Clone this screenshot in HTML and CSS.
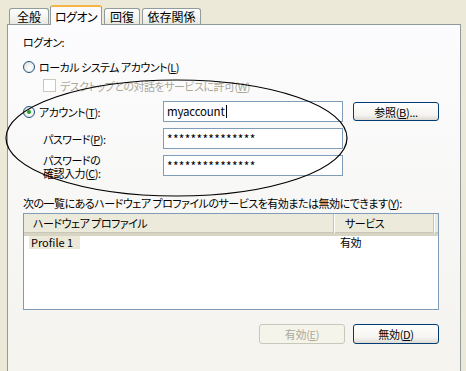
FILE: index.html
```html
<!DOCTYPE html>
<html>
<head>
    <meta charset="UTF-8">
    <title>プロパティ - ログオン</title>
    <link rel="stylesheet" href="styles.css">
</head>
<body>
<div class="window">
    <div class="tabs">
        <div class="tab tab-general">全般</div>
        <div class="tab tab-active">ログオン</div>
        <div class="tab tab-recovery">回復</div>
        <div class="tab tab-deps">依存関係</div>
    </div>

    <div class="panel">
        <div class="caption">ログオン:</div>

        <div class="option option-local"><span class="radio"></span>ローカル システム アカウント(<u>L</u>)</div>
        <div class="option option-desktop"><span class="check"></span>デスクトップとの対話をサービスに許可(<u>W</u>)</div>

        <div class="account-grid">
            <div class="option"><span class="radio radio-on"></span>アカウント(<u>T</u>):</div>
            <div class="field">myaccount<span class="caret"></span></div>
            <button class="btn">参照(<u>B</u>)...</button>

            <div class="field-label">パスワード(<u>P</u>):</div>
            <div class="field secret">***************</div>
            <div></div>

            <div class="field-label two-line">
                <div>パスワードの</div>
                <div>確認入力(<u>C</u>):</div>
            </div>
            <div class="field secret">***************</div>
            <div></div>
        </div>

        <div class="list-caption">次の一覧にあるハードウェア プロファイルのサービスを有効または無効にできます(<u>Y</u>):</div>

        <div class="listview">
            <div class="list-head">
                <div class="col col-profile">ハードウェア プロファイル</div>
                <div class="col col-service">サービス</div>
                <div class="col col-rest"></div>
            </div>
            <div class="list-row">
                <div class="cell-profile"><span class="sel">Profile 1</span></div>
                <div class="cell-service">有効</div>
            </div>
        </div>

        <div class="actions">
            <button class="btn" disabled>有効(<u>E</u>)</button>
            <button class="btn">無効(<u>D</u>)</button>
        </div>
    </div>

    <!-- hand drawn marker over the account fields -->
    <svg class="annotation" width="466" height="371" viewBox="0 0 466 371">
        <ellipse cx="176.5" cy="138" rx="170.5" ry="58" fill="none" stroke="#000" stroke-width="1.2"/>
    </svg>
</div>
</body>
</html>
```

FILE: styles.css
```css
body {
    margin: 0;
    padding: 0;
    background-color: #ece9d8;
    font-family: "Noto Sans CJK JP", "Liberation Sans", sans-serif;
    font-size: 11px;
    letter-spacing: -0.5px;
    font-feature-settings: "palt";
    color: #000;
}

.window {
    position: relative;
    width: 466px;
    height: 371px;
    padding: 5px 0 0 7px;
    box-sizing: border-box;
}

/* tabs */

.tabs {
    display: flex;
    align-items: flex-end;
    height: 19px;
    padding-left: 2px;
}

.tab {
    height: 15px;
    line-height: 16px;
    border: 1px solid #919b9c;
    border-bottom: none;
    border-radius: 3px 3px 0 0;
    background: linear-gradient(#ffffff, #f3f3ef 60%, #e8e7e0);
    text-align: center;
    margin-right: 1px;
    font-size: 12px;
    letter-spacing: 0;
}

.tab-general {
    width: 38px;
}

.tab-recovery {
    width: 34px;
    margin-left: 1px;
    margin-right: 2px;
}

.tab-deps {
    width: 57px;
}

.tab-active {
    position: relative;
    width: 50px;
    height: 18px;
    line-height: 19px;
    margin-bottom: -1px;
    background: #fcfcfe;
    border-top: 2px solid #f5b446;
    border-color: #919b9c;
    border-top-color: #f5b446;
    letter-spacing: -0.5px;
    z-index: 2;
}

/* panel */

.panel {
    width: 416px;
    height: 341px;
    border: 1px solid #919b9c;
    background: linear-gradient(#fcfcfe, #f4f3ee);
    padding: 10px 21px 0 15px;
    display: flex;
    flex-direction: column;
}

.caption {
    height: 15px;
    line-height: 15px;
}

.option {
    display: flex;
    align-items: center;
    height: 14px;
    line-height: 14px;
    white-space: nowrap;
}

.option-local {
    margin-top: 10px;
}

.option-desktop {
    margin-top: 5px;
    padding-left: 20px;
    height: 13px;
    color: #aca899;
}

.radio {
    width: 10px;
    height: 10px;
    border: 1px solid #1c5180;
    border-radius: 50%;
    background: radial-gradient(circle at 60% 60%, #ffffff, #dcdcd6);
    margin-right: 4px;
    position: relative;
    flex: none;
}

.radio-on::after {
    content: "";
    position: absolute;
    left: 3px;
    top: 3px;
    width: 4px;
    height: 4px;
    border-radius: 50%;
    background: #21a121;
}

.check {
    width: 11px;
    height: 11px;
    border: 1px solid #cac8bb;
    background: #fff;
    margin-right: 4px;
    flex: none;
}

/* account fields */

.account-grid {
    display: grid;
    grid-template-columns: 130px 180px 86px;
    grid-auto-rows: 21px;
    column-gap: 10px;
    row-gap: 6px;
    margin-top: 9px;
    align-items: center;
}

.field {
    height: 19px;
    line-height: 19px;
    border: 1px solid #7f9db9;
    background: #fff;
    padding-left: 3px;
    display: flex;
    align-items: center;
    font-size: 11.5px;
    letter-spacing: -0.2px;
}

.secret {
    font-size: 12px;
    letter-spacing: 0.3px;
}

.caret {
    display: inline-block;
    width: 1px;
    height: 13px;
    background: #000;
    margin-left: 1px;
}

.field-label {
    padding-left: 20px;
    line-height: 14px;
}

.two-line {
    line-height: 12px;
    display: flex;
    flex-direction: column;
    gap: 1px;
    margin-top: 1px;
}

.btn {
    height: 19px;
    padding: 0;
    border: 1px solid #003c74;
    border-radius: 3px;
    background: linear-gradient(#ffffff, #f5f4f0 70%, #dcdad2);
    font-family: inherit;
    font-size: 11px;
    letter-spacing: -0.3px;
    font-feature-settings: "palt";
    line-height: 16px;
    color: #000;
}

.btn:disabled {
    border-color: #c9c7ba;
    background: #f5f4ea;
    color: #aca899;
}

/* hardware profiles list */

.list-caption {
    margin-top: 20px;
    height: 14px;
    line-height: 14px;
    white-space: nowrap;
}

.listview {
    margin-top: 3px;
    height: 95px;
    border: 1px solid #7f9db9;
    background: #fff;
}

.list-head {
    display: flex;
    height: 19px;
    background: #ebeadb;
    border-bottom: 3px solid #d8d4c4;
    box-shadow: inset 0 -1px 0 #cbc7b8;
}

.col {
    line-height: 19px;
    white-space: nowrap;
}

.col-profile {
    width: 300px;
    padding-left: 9px;
    border-right: 1px solid #c7c5b2;
}

.col-service {
    width: 88px;
    padding-left: 10px;
    border-left: 1px solid #ffffff;
    border-right: 1px solid #c7c5b2;
}

.col-rest {
    flex: 1;
    border-left: 1px solid #ffffff;
}

.list-row {
    display: flex;
    height: 13px;
    line-height: 13px;
}

.cell-profile {
    width: 304px;
    padding-left: 5px;
    letter-spacing: 0;
}

.sel {
    display: inline-block;
    background: #ece9d8;
    padding: 0 7px 0 2px;
}

.cell-service {
    padding-left: 7px;
}

.actions {
    display: flex;
    justify-content: flex-end;
    gap: 8px;
    margin-top: 14px;
}

.actions .btn {
    width: 86px;
    height: 20px;
}

.annotation {
    position: absolute;
    left: 0;
    top: 0;
    pointer-events: none;
}
```
